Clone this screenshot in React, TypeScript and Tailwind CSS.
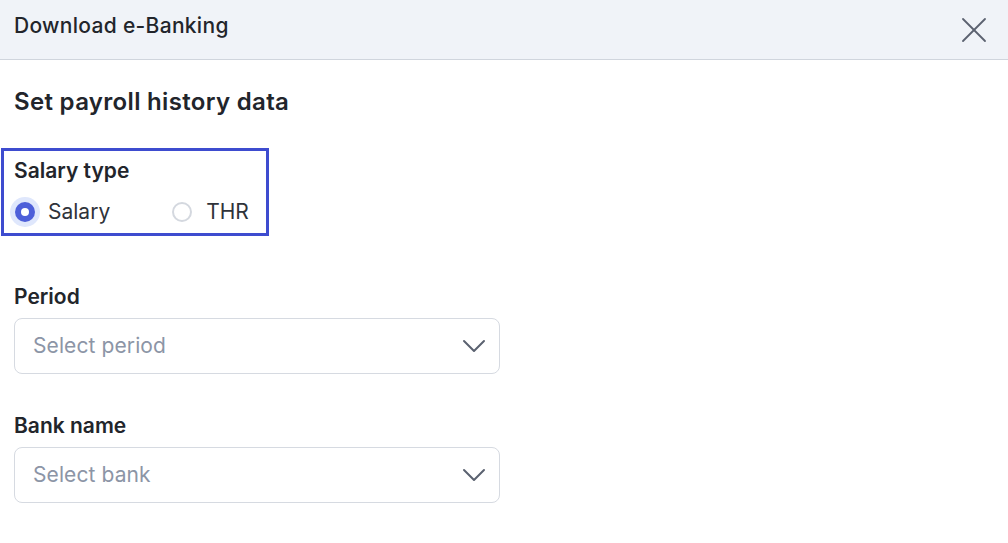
import { X, ChevronDown } from 'lucide-react'

function SelectField({ label, placeholder, className }: { label: string; placeholder: string; className?: string }) {
  return (
    <div className={`flex flex-col ${className ?? ''}`}>
      <label className="text-[21px] font-semibold leading-[28px] text-[#22252b]">{label}</label>
      <button
        type="button"
        className="mt-[7px] flex h-[56px] w-[486px] items-center justify-between rounded-[8px] border border-[#d6dae1] bg-white pl-[18px] pr-[5px] text-left"
      >
        <span className="text-[21px] tracking-[0.1px] text-[#8c95a6]">{placeholder}</span>
        <ChevronDown className="h-[40px] w-[40px] text-[#5b6270]" strokeWidth={1.2} />
      </button>
    </div>
  )
}

export default function App() {
  return (
    <div className="h-[543px] w-[1008px] overflow-hidden bg-white font-['Inter',sans-serif]">
      <header className="flex h-[60px] items-center justify-between border-b border-[#d0d5dd] bg-[#f0f3f8] pl-[14px] pr-[12px]">
        <h1 className="pb-[8px] text-[21px] font-medium tracking-[0.3px] text-[#22252b]">Download e-Banking</h1>
        <X className="h-[44px] w-[44px] text-[#5b6270]" strokeWidth={1} />
      </header>

      <div className="px-[14px] pt-[26px]">
        <h2 className="text-[24px] font-semibold leading-[32px] tracking-[0.32px] text-[#22252b]">Set payroll history data</h2>

        <div className="-ml-[13px] mt-[30px] w-[268px] border-[3px] border-[#3e4ccf] pb-[7px] pl-[10px] pt-[6px]">
          <div className="text-[21px] font-semibold leading-[28px] text-[#22252b]">Salary type</div>
          <div className="mt-[13px] flex items-center">
            <label className="ml-[1px] flex items-center">
              <span className="flex h-[20px] w-[20px] items-center justify-center rounded-full bg-[#4d5fd9] ring-[5px] ring-[#dfe7fc]">
                <span className="h-[8px] w-[8px] rounded-full bg-white" />
              </span>
              <span className="ml-[13px] text-[21px] leading-[28px] text-[#2f333a]">Salary</span>
            </label>
            <label className="ml-[62px] flex items-center">
              <span className="h-[20px] w-[20px] rounded-full border-2 border-[#d4d8df] bg-white" />
              <span className="ml-[14px] text-[21px] leading-[28px] text-[#2f333a]">THR</span>
            </label>
          </div>
        </div>

        <SelectField className="mt-[47px]" label="Period" placeholder="Select period" />
        <SelectField className="mt-[38px]" label="Bank name" placeholder="Select bank" />
      </div>
    </div>
  )
}
